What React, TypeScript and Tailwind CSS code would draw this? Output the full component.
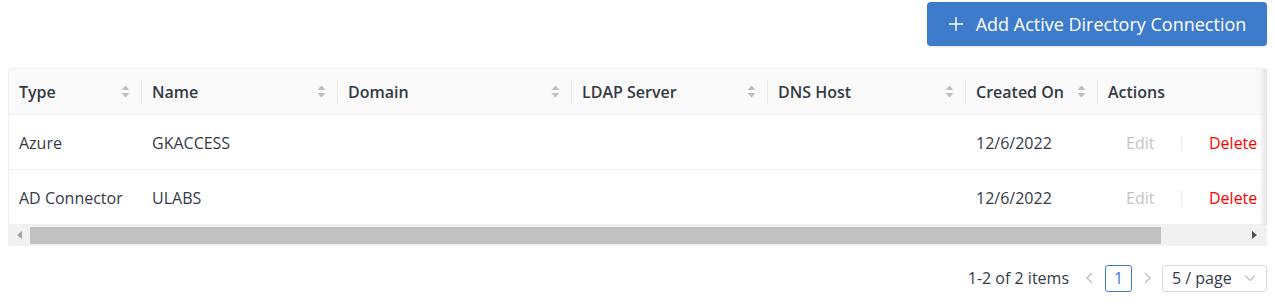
import React from 'react';

const font = { fontFamily: '"Open Sans", "Noto Sans", Arial, sans-serif' };

const SortIcon: React.FC = () => (
  <svg width="9" height="13" viewBox="0 0 9 13" className="shrink-0">
    <path d="M4.5 0.5 L8.5 5 L0.5 5 Z" fill="#bfbfbf" />
    <path d="M0.5 8 L8.5 8 L4.5 12.5 Z" fill="#bfbfbf" />
  </svg>
);

const columns = [
  { title: 'Type', width: 133, sort: true },
  { title: 'Name', width: 196, sort: true },
  { title: 'Domain', width: 234, sort: true },
  { title: 'LDAP Server', width: 196, sort: true },
  { title: 'DNS Host', width: 198, sort: true },
  { title: 'Created On', width: 132, sort: true },
  { title: 'Actions', width: 180, sort: false },
];

const rows = [
  { type: 'Azure', name: 'GKACCESS', created: '12/6/2022' },
  { type: 'AD Connector', name: 'ULABS', created: '12/6/2022' },
];

const App: React.FC = () => {
  return (
    <div className="bg-white w-[1275px] h-[306px] text-[#343a46]" style={font}>
      {/* toolbar */}
      <div className="flex justify-end pt-[2px] pr-[8px]">
        <button className="h-[44px] w-[340px] rounded-[4px] bg-[#3e7bcb] text-white text-[18px] flex items-center justify-center gap-[12px] shadow-sm">
          <svg width="16" height="16" viewBox="0 0 16 16">
            <path d="M8 1 V15 M1 8 H15" stroke="white" strokeWidth="1.4" />
          </svg>
          <span>Add Active Directory Connection</span>
        </button>
      </div>

      {/* table */}
      <div className="ml-[8px] mt-[22px] w-[1259px] relative border-l border-t border-[#f0f0f0] rounded-tl-[4px] overflow-hidden">
        <table className="border-collapse table-fixed text-[16px]" style={{ width: 1269 }}>
          <colgroup>
            {columns.map((c) => (
              <col key={c.title} style={{ width: c.width }} />
            ))}
          </colgroup>
          <thead>
            <tr className="bg-[#fafafa] h-[45px] border-b border-[#f0f0f0]">
              {columns.map((c, i) => (
                <th key={c.title} className="relative text-left font-semibold px-[10px] pt-[1px]">
                  <div className="flex items-center justify-between pr-[2px]">
                    <span>{c.title}</span>
                    {c.sort && <SortIcon />}
                  </div>
                  {i < columns.length - 1 && (
                    <span className="absolute right-0 top-[11px] h-[24px] w-px bg-[#ececec]" />
                  )}
                </th>
              ))}
            </tr>
          </thead>
          <tbody>
            {rows.map((r) => (
              <tr key={r.name} className="h-[55px] border-b border-[#f0f0f0]">
                <td className="px-[10px] pt-[2px]">{r.type}</td>
                <td className="px-[10px] pt-[2px]">{r.name}</td>
                <td className="px-[10px]" />
                <td className="px-[10px]" />
                <td className="px-[10px]" />
                <td className="px-[10px] pt-[2px]">{r.created}</td>
                <td className="px-[10px] pt-[2px]">
                  <div className="flex items-center">
                    <span className="text-[#c4c4c4] ml-[18px] w-[55px]">Edit</span>
                    <span className="h-[16px] w-px bg-[#ececec]" />
                    <span className="text-[#ff0000] ml-[27px]">Delete</span>
                  </div>
                </td>
              </tr>
            ))}
          </tbody>
        </table>

        {/* scrollbar */}
        <div className="h-[21px] bg-[#f1f1f1] flex items-center">
          <div className="w-[21px] flex justify-center">
            <svg width="6" height="8" viewBox="0 0 6 8">
              <path d="M5 0 L0 4 L5 8 Z" fill="#a3a3a3" />
            </svg>
          </div>
          <div className="h-[17px] w-[1131px] bg-[#c1c1c1]" />
          <div className="flex-1" />
          <div className="w-[21px] flex justify-center pr-[4px]">
            <svg width="6" height="8" viewBox="0 0 6 8">
              <path d="M0 0 L5 4 L0 8 Z" fill="#505050" />
            </svg>
          </div>
        </div>

        {/* right scroll shadow */}
        <div className="absolute right-0 top-0 bottom-[21px] w-[8px] bg-gradient-to-l from-[#e2e2e2] to-transparent pointer-events-none" />
      </div>

      {/* pagination */}
      <div className="flex justify-end items-center pr-[8px] mt-[19px] text-[16px]">
        <span className="mr-[16px]">1-2 of 2 items</span>
        <svg width="10" height="14" viewBox="0 0 10 14" className="mr-[10px]">
          <path d="M7 2 L2 7 L7 12" stroke="#bdbdbd" strokeWidth="1.3" fill="none" />
        </svg>
        <div className="h-[27px] w-[27px] border border-[#3e7bcb] rounded-[3px] flex items-center justify-center text-[#3e7bcb]">
          1
        </div>
        <svg width="10" height="14" viewBox="0 0 10 14" className="ml-[10px] mr-[10px]">
          <path d="M3 2 L8 7 L3 12" stroke="#bdbdbd" strokeWidth="1.3" fill="none" />
        </svg>
        <div className="h-[27px] w-[105px] border border-[#d9d9d9] rounded-[3px] flex items-center justify-between pl-[9px] pr-[10px]">
          <span>5 / page</span>
          <svg width="12" height="8" viewBox="0 0 12 8">
            <path d="M1 1.5 L6 6.5 L11 1.5" stroke="#bdbdbd" strokeWidth="1.2" fill="none" />
          </svg>
        </div>
      </div>
    </div>
  );
};

export default App;
